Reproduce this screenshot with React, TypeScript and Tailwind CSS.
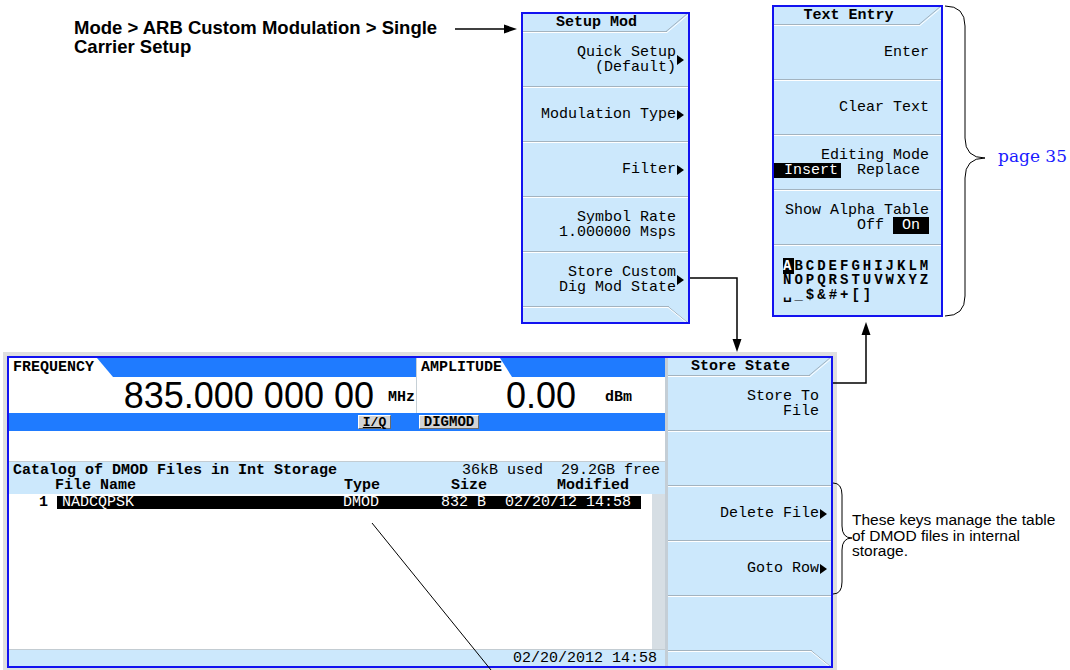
import React from 'react';

const mono = "font-['Liberation_Mono','DejaVu_Sans_Mono',monospace]";
const sans = "font-['Liberation_Sans',Arial,sans-serif]";

function Tri() {
  return <span className="inline-block w-0 h-0 border-y-[5px] border-y-transparent border-l-[7px] border-l-black" />;
}

function Sep() {
  return <div className="h-[2px] border-t border-t-[#a3b3bf] bg-white" />;
}

function Key({ children, arrow, className = 'h-[53px]' }: { children?: React.ReactNode; arrow?: boolean; className?: string }) {
  return (
    <div className={`flex items-center justify-end ${className}`}>
      <div className="text-right leading-[15px] whitespace-pre">{children}</div>
      <div className="w-[12px] flex justify-start pl-[1px]">{arrow && <Tri />}</div>
    </div>
  );
}

function Header({ title }: { title: string }) {
  return (
    <div className="relative h-[19px] flex items-center justify-center pr-[18px] pb-[2px] font-bold text-[15px] leading-none">
      {title}
      <div className="absolute left-0 right-[21px] bottom-0 h-[2px] border-t border-t-[#a3b3bf] bg-white" />
      <svg className="absolute right-0 top-0" width="22" height="19">
        <line x1="0" y1="17.5" x2="22" y2="-1" stroke="#a3b3bf" strokeWidth="1" />
        <line x1="1" y1="18.5" x2="23" y2="0" stroke="#ffffff" strokeWidth="1" />
      </svg>
    </div>
  );
}

function Footer() {
  return (
    <div className="relative h-[16px]">
      <div className="absolute left-0 right-[19px] top-0 h-[2px] border-t border-t-[#a3b3bf] bg-white" />
      <svg className="absolute right-0 top-0" width="20" height="16">
        <line x1="0" y1="0.5" x2="20" y2="17" stroke="#a3b3bf" strokeWidth="1" />
        <line x1="0" y1="1.5" x2="19" y2="17" stroke="#ffffff" strokeWidth="1" />
      </svg>
    </div>
  );
}

function SetupMod() {
  return (
    <div className={`absolute left-[521px] top-[12px] w-[169px] border-2 border-[#1212f0] bg-[#cce8fc] text-[15px] ${mono}`}>
      <Header title="Setup Mod" />
      <Key arrow>{'Quick Setup\n(Default)'}</Key>
      <Sep />
      <Key arrow>Modulation Type</Key>
      <Sep />
      <Key arrow>Filter</Key>
      <Sep />
      <Key>{'Symbol Rate\n1.000000 Msps'}</Key>
      <Sep />
      <Key arrow>{'Store Custom\nDig Mod State'}</Key>
      <Footer />
    </div>
  );
}

function TextEntry() {
  return (
    <div className={`absolute left-[772px] top-[5px] w-[171px] border-2 border-[#1212f0] bg-[#cce8fc] text-[15px] ${mono}`}>
      <Header title="Text Entry" />
      <Key>Enter</Key>
      <Sep />
      <Key>Clear Text</Key>
      <Sep />
      <div className="h-[53px] flex flex-col justify-center leading-[15px] pr-[12px] text-right whitespace-pre">
        <div>Editing Mode</div>
        <div className="flex justify-between">
          <span className="bg-black text-white pl-[10px] pr-[3px]">Insert</span>
          <span>{' Replace '}</span>
        </div>
      </div>
      <Sep />
      <div className="h-[53px] flex flex-col justify-center leading-[15px] pr-[12px] text-right whitespace-pre">
        <div>Show Alpha Table</div>
        <div>
          {'Off '}
          <span className="bg-black text-white">{' On '}</span>
        </div>
      </div>
      <Sep />
      <div className="h-[69px] flex flex-col justify-center pl-[9px] font-bold leading-[14px] tracking-[3px] text-[14px]">
        <div>
          <span className="bg-black text-white">A</span>BCDEFGHIJKLM
        </div>
        <div>NOPQRSTUVWXYZ</div>
        <div>
          <span className="font-['DejaVu_Sans_Mono',monospace]">␣</span>_$&amp;#+[]
        </div>
      </div>
    </div>
  );
}

function TopCell({ label, tabW, className, children }: { label: string; tabW: string; className: string; children: React.ReactNode }) {
  return (
    <div className={`flex flex-col ${className}`}>
      <div className="h-[19px] bg-[#1f7bff] flex">
        <div className={`h-full bg-white pl-[4px] pt-[2px] font-bold text-[15px] leading-[15px] ${tabW}`}>{label}</div>
      </div>
      <div className="h-[36px] bg-white flex justify-end">{children}</div>
    </div>
  );
}

function MainScreen() {
  return (
    <div className={`absolute left-[7px] top-[356px] w-[826px] h-[312px] border-2 border-[#1212f0] ring-4 ring-[#dfdfdf] flex bg-white text-[15px] ${mono}`}>
      <div className="w-[656px] flex flex-col">
        <div className="h-[55px] flex">
          <TopCell label="FREQUENCY" tabW="w-[104px] [clip-path:polygon(0_0,88px_0,100%_100%,0_100%)]" className="w-[407px]">
            <span className={`text-[36px] leading-none mt-[1px] ${sans}`}>835.000 000 00</span>
            <span className="font-bold text-[15px] leading-none mt-[13px] ml-[14px] mr-[1px]">MHz</span>
          </TopCell>
          <div className="w-[1px] bg-[#c6d0d6]" />
          <TopCell label="AMPLITUDE" tabW="w-[95px] [clip-path:polygon(0_0,83px_0,100%_100%,0_100%)]" className="flex-1">
            <span className={`text-[36px] leading-none mt-[1px] ${sans}`}>0.00</span>
            <span className="font-bold text-[15px] leading-none mt-[13px] ml-[29px] mr-[33px]">dBm</span>
          </TopCell>
        </div>
        <div className="h-[18px] bg-[#1f7bff] flex items-center">
          <span className="ml-[349px] h-[14px] w-[33px] bg-[#d4d4d4] border border-t-white border-l-white border-b-[#6b6b6b] border-r-[#6b6b6b] flex items-center justify-center font-bold text-[13px] leading-none underline">I/Q</span>
          <span className="ml-[28px] h-[14px] w-[60px] bg-[#d4d4d4] border border-t-white border-l-white border-b-[#6b6b6b] border-r-[#6b6b6b] flex items-center justify-center font-bold text-[14px] leading-none">DIGMOD</span>
        </div>
        <div className="h-[30px] bg-white" />
        <div className="h-[1px] bg-[#c3ccd2]" />
        <div className="h-[32px] bg-[#cce8fc] flex flex-col justify-center leading-[15px] whitespace-pre">
          <div className="flex justify-between pl-[4px] pr-[5px]">
            <span className="font-bold">Catalog of DMOD Files in Int Storage</span>
            <span>36kB used  29.2GB free</span>
          </div>
          <div className="flex font-bold">
            <span className="w-[335px] pl-[46px]">File Name</span>
            <span className="w-[107px]">Type</span>
            <span className="w-[106px]">Size</span>
            <span>Modified</span>
          </div>
        </div>
        <div className="h-[155px] flex">
          <div className="flex-1 pt-[2px]">
            <div className="flex items-center h-[13px] leading-[13px] whitespace-pre">
              <span className="w-[48px] pr-[9px] text-right font-bold">1</span>
              <div className="w-[584px] h-full bg-black text-white flex">
                <span className="w-[286px] pl-[5px]">NADCQPSK</span>
                <span className="w-[98px]">DMOD</span>
                <span className="w-[64px]">832 B</span>
                <span>02/20/12 14:58</span>
              </div>
            </div>
          </div>
          <div className="w-[13px] bg-[#d6dee4]" />
        </div>
        <div className="h-[1px] bg-[#c3ccd2]" />
        <div className="flex-1 bg-[#cce8fc] flex items-center justify-end pr-[8px] leading-none">02/20/2012 14:58</div>
      </div>
      <div className="w-[3px] bg-[#c4ced6]" />
      <div className="flex-1 bg-[#cce8fc] flex flex-col">
        <Header title="Store State" />
        <Key>{'Store To\nFile'}</Key>
        <Sep />
        <Key />
        <Sep />
        <Key arrow>Delete File</Key>
        <Sep />
        <Key arrow>Goto Row</Key>
        <Sep />
        <Key />
        <Footer />
      </div>
    </div>
  );
}

export default function App() {
  return (
    <div className="relative w-[1070px] h-[670px] bg-white overflow-hidden text-black">
      <div className={`absolute left-[74px] top-[18px] font-bold text-[18.5px] leading-[19px] ${sans}`}>
        Mode &gt; ARB Custom Modulation &gt; Single
        <br />
        Carrier Setup
      </div>
      <SetupMod />
      <TextEntry />
      <div className="absolute left-[998px] top-[144px] text-[17px] text-[#1a1aff] font-['DejaVu_Serif',serif]">page 35</div>
      <MainScreen />
      <div className={`absolute left-[852px] top-[512px] text-[15.5px] leading-[15.5px] ${sans}`}>
        These keys manage the table
        <br />
        of DMOD files in internal
        <br />
        storage.
      </div>
      <svg className="absolute inset-0 pointer-events-none" width="1070" height="670">
        <g stroke="black" fill="none">
          <line x1="455" y1="29" x2="506" y2="29" strokeWidth="1.5" />
          <polyline points="690,278 737,278 737,340" strokeWidth="1.5" />
          <polyline points="833,383 866,383 866,334" strokeWidth="1.5" />
          <path d="M945,6 Q965,6 965,26 L965,138 Q965,158 985,158 Q965,158 965,178 L965,296 Q965,316 945,316" strokeWidth="1" />
          <path d="M833,483 Q842,483 842,495 L842,526 Q842,538 852,538 Q842,538 842,550 L842,582 Q842,594 833,594" strokeWidth="1" />
          <line x1="372" y1="523" x2="491" y2="670" strokeWidth="1" />
        </g>
        <g fill="black">
          <polygon points="517,29 504,24.5 504,33.5" />
          <polygon points="737,352 732.5,339 741.5,339" />
          <polygon points="866,322 861.5,335 870.5,335" />
        </g>
      </svg>
    </div>
  );
}
